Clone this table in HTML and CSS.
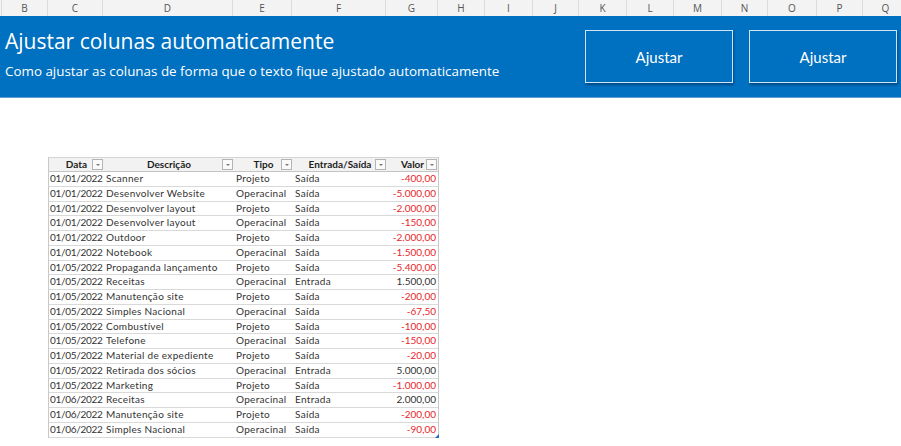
FILE: index.html
```html
<!DOCTYPE html>
<html lang="pt-BR">
<head>
<meta charset="utf-8">
<title>Ajustar colunas automaticamente</title>
<link rel="stylesheet" href="styles.css">
</head>
<body>
<div class="colhead">
  <div class="ch" style="width:2px"></div>
  <div class="ch" style="width:46px">B</div>
  <div class="ch" style="width:55px">C</div>
  <div class="ch" style="width:130px">D</div>
  <div class="ch" style="width:59px">E</div>
  <div class="ch" style="width:94px">F</div>
  <div class="ch" style="width:52px">G</div>
  <div class="ch" style="width:47px">H</div>
  <div class="ch" style="width:48px">I</div>
  <div class="ch" style="width:46px">J</div>
  <div class="ch" style="width:48px">K</div>
  <div class="ch" style="width:47px">L</div>
  <div class="ch" style="width:48px">M</div>
  <div class="ch" style="width:46px">N</div>
  <div class="ch" style="width:49px">O</div>
  <div class="ch" style="width:46px">P</div>
  <div class="ch" style="width:46px">Q</div>
</div>
<header class="banner">
  <div class="banner-text">
    <h1 class="title">Ajustar colunas automaticamente</h1>
    <p class="subtitle">Como ajustar as colunas de forma que o texto fique ajustado automaticamente</p>
  </div>
  <div class="buttons">
    <button class="btn">Ajustar</button>
    <button class="btn">Ajustar</button>
  </div>
</header>
<main class="sheet">
  <div class="table">
    <div class="row head">
      <div class="cell">Data<span class="dd"></span></div>
      <div class="cell">Descrição<span class="dd"></span></div>
      <div class="cell">Tipo<span class="dd"></span></div>
      <div class="cell">Entrada/Saída<span class="dd"></span></div>
      <div class="cell">Valor<span class="dd"></span></div>
    </div>
    <div class="row"><div class="cell date">01/01/2022</div><div class="cell">Scanner</div><div class="cell">Projeto</div><div class="cell">Saída</div><div class="cell num neg">-400,00</div></div>
    <div class="row"><div class="cell date">01/01/2022</div><div class="cell">Desenvolver Website</div><div class="cell">Operacinal</div><div class="cell">Saída</div><div class="cell num neg">-5.000,00</div></div>
    <div class="row"><div class="cell date">01/01/2022</div><div class="cell">Desenvolver layout</div><div class="cell">Projeto</div><div class="cell">Saída</div><div class="cell num neg">-2.000,00</div></div>
    <div class="row"><div class="cell date">01/01/2022</div><div class="cell">Desenvolver layout</div><div class="cell">Operacinal</div><div class="cell">Saída</div><div class="cell num neg">-150,00</div></div>
    <div class="row"><div class="cell date">01/01/2022</div><div class="cell">Outdoor</div><div class="cell">Projeto</div><div class="cell">Saída</div><div class="cell num neg">-2.000,00</div></div>
    <div class="row"><div class="cell date">01/01/2022</div><div class="cell">Notebook</div><div class="cell">Operacinal</div><div class="cell">Saída</div><div class="cell num neg">-1.500,00</div></div>
    <div class="row"><div class="cell date">01/05/2022</div><div class="cell">Propaganda lançamento</div><div class="cell">Projeto</div><div class="cell">Saída</div><div class="cell num neg">-5.400,00</div></div>
    <div class="row"><div class="cell date">01/05/2022</div><div class="cell">Receitas</div><div class="cell">Operacinal</div><div class="cell">Entrada</div><div class="cell num">1.500,00</div></div>
    <div class="row"><div class="cell date">01/05/2022</div><div class="cell">Manutenção site</div><div class="cell">Projeto</div><div class="cell">Saída</div><div class="cell num neg">-200,00</div></div>
    <div class="row"><div class="cell date">01/05/2022</div><div class="cell">Simples Nacional</div><div class="cell">Operacinal</div><div class="cell">Saída</div><div class="cell num neg">-67,50</div></div>
    <div class="row"><div class="cell date">01/05/2022</div><div class="cell">Combustível</div><div class="cell">Projeto</div><div class="cell">Saída</div><div class="cell num neg">-100,00</div></div>
    <div class="row"><div class="cell date">01/05/2022</div><div class="cell">Telefone</div><div class="cell">Operacinal</div><div class="cell">Saída</div><div class="cell num neg">-150,00</div></div>
    <div class="row"><div class="cell date">01/05/2022</div><div class="cell">Material de expediente</div><div class="cell">Projeto</div><div class="cell">Saída</div><div class="cell num neg">-20,00</div></div>
    <div class="row"><div class="cell date">01/05/2022</div><div class="cell">Retirada dos sócios</div><div class="cell">Operacinal</div><div class="cell">Entrada</div><div class="cell num">5.000,00</div></div>
    <div class="row"><div class="cell date">01/05/2022</div><div class="cell">Marketing</div><div class="cell">Projeto</div><div class="cell">Saída</div><div class="cell num neg">-1.000,00</div></div>
    <div class="row"><div class="cell date">01/06/2022</div><div class="cell">Receitas</div><div class="cell">Operacinal</div><div class="cell">Entrada</div><div class="cell num">2.000,00</div></div>
    <div class="row"><div class="cell date">01/06/2022</div><div class="cell">Manutenção site</div><div class="cell">Projeto</div><div class="cell">Saída</div><div class="cell num neg">-200,00</div></div>
    <div class="row last"><div class="cell date">01/06/2022</div><div class="cell">Simples Nacional</div><div class="cell">Operacinal</div><div class="cell">Saída</div><div class="cell num neg">-90,00<span class="handle"></span></div></div>
  </div>
</main>
</body>
</html>
```
FILE: styles.css
```css
* { box-sizing: border-box; }
html, body { margin: 0; padding: 0; background: #ffffff; }
body { width: 901px; height: 446px; overflow: hidden; font-family: "Open Sans", "Noto Sans", sans-serif; }

.colhead {
  display: flex;
  height: 16px;
  background: #f3f3f3;
  overflow: hidden;
  white-space: nowrap;
}
.ch {
  flex: none;
  height: 16px;
  line-height: 16px;
  text-align: center;
  font-size: 10px;
  color: #555;
  border-right: 1px solid #dcdcdc;
}

.banner {
  display: flex;
  justify-content: space-between;
  height: 82px;
  background: #0070c0;
  color: #fff;
  border-bottom: 1px solid #5a9fd6;
}
.banner-text { padding: 10px 0 0 5px; }
.title {
  margin: 0;
  font-family: "Open Sans", "Noto Sans", sans-serif;
  font-weight: 400;
  font-size: 21px;
  line-height: 30px;
  letter-spacing: 0;
}
.subtitle {
  margin: 6px 0 0 0;
  font-size: 13.4px;
  line-height: 18px;
}
.buttons {
  display: flex;
  gap: 16px;
  padding: 14px 4px 0 0;
}
.btn {
  width: 148px;
  height: 53px;
  background: #0070c0;
  color: #fff;
  border: 1.5px solid #d0e4f4;
  box-shadow: 1px 2px 2px rgba(0, 30, 70, 0.45);
  font-family: "Lato", "Open Sans", sans-serif;
  font-size: 15px;
  padding: 0;
}

.sheet { padding: 59px 0 0 48px; }
.table {
  width: 391px;
  border-left: 1px solid #c8c8c8;
  border-right: 1px solid #c8c8c8;
  font-family: "Lato", "Open Sans", sans-serif;
  font-size: 10px;
  color: #333;
}
.row {
  display: grid;
  grid-template-columns: 55px 130px 59px 94px 51px;
  height: 14.75px;
  border-bottom: 1px solid #d9d9d9;
}
.row.head {
  height: 15px;
  background: #f2f2f2;
  border-top: 1px solid #d4d4d4;
  border-bottom: 1px solid #c4c4c4;
  font-weight: 700;
  color: #222;
}
.cell {
  position: relative;
  padding: 0 2px 0 2px;
  line-height: 13.75px;
  white-space: nowrap;
  overflow: visible;
  letter-spacing: 0.3px;
}
.cell.date { letter-spacing: -0.3px; padding-left: 1px; }
.head .cell { text-align: center; line-height: 13px; padding: 0; letter-spacing: 0; }
.num { text-align: right; padding-right: 2px; letter-spacing: 0; }
.neg { color: #e8262b; }
.dd {
  position: absolute;
  right: 1px;
  top: 1px;
  width: 11px;
  height: 11px;
  border: 1px solid #b4b4b4;
  background: #fafafa;
}
.dd::after {
  content: "";
  position: absolute;
  left: 3px;
  top: 4px;
  border-left: 2px solid transparent;
  border-right: 2px solid transparent;
  border-top: 2px solid #777;
}
.handle {
  position: absolute;
  right: -1px;
  bottom: -1px;
  width: 0;
  height: 0;
  border-left: 4px solid transparent;
  border-bottom: 4px solid #2a63b5;
}
```
